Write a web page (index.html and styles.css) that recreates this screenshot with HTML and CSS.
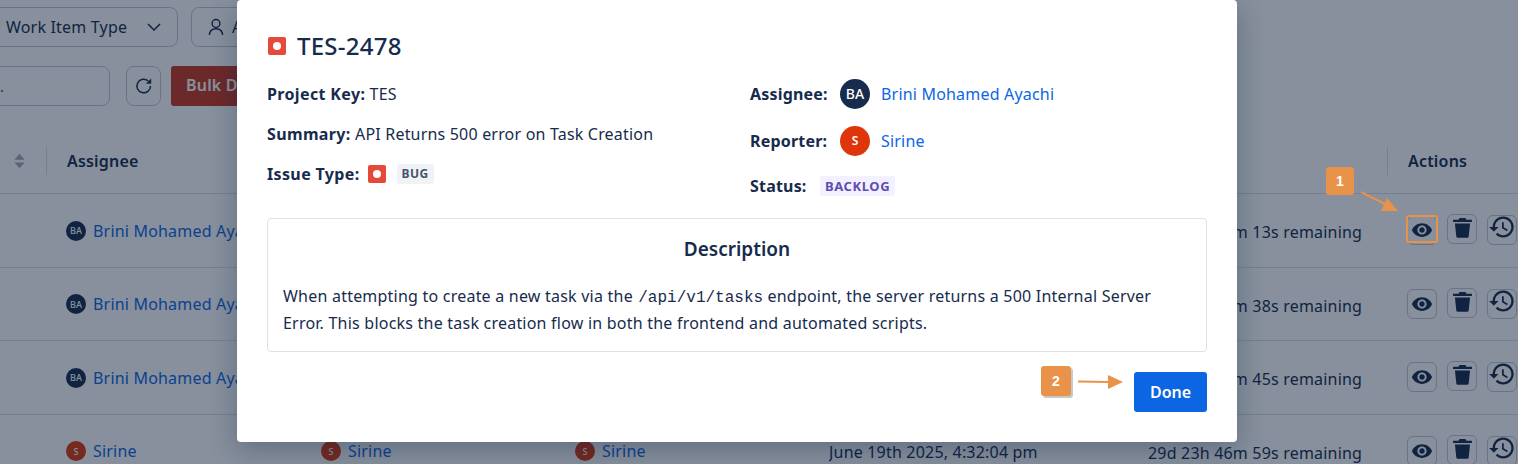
FILE: index.html
```html
<!DOCTYPE html>
<html lang="en">
<head>
<meta charset="utf-8">
<title>TES-2478</title>
<link rel="stylesheet" href="styles.css">
</head>
<body>
<svg class="defs" width="0" height="0" aria-hidden="true">
  <symbol id="eye" viewBox="0 0 24 24"><path d="M12 4.5C7 4.5 2.73 7.61 1 12c1.73 4.39 6 7.5 11 7.5s9.27-3.11 11-7.5c-1.73-4.39-6-7.5-11-7.5zM12 17c-2.76 0-5-2.24-5-5s2.24-5 5-5 5 2.24 5 5-2.24 5-5 5zm0-8c-1.66 0-3 1.34-3 3s1.34 3 3 3 3-1.34 3-3-1.34-3-3-3z"/></symbol>
  <symbol id="trash" viewBox="0 0 20 20"><path d="M7.2 1h5.600l1 1.600h5.200v2.200H1V2.600h5.200zM2.800 6.200h14.400l-1.300 12.400a1.400 1.400 0 0 1-1.400 1.200H5.500a1.400 1.400 0 0 1-1.400-1.200z"/></symbol>
  <symbol id="history" viewBox="0 0 24 24"><path d="M13 3c-4.97 0-9 4.03-9 9H1l3.89 3.89.07.14L9 12H6c0-3.87 3.13-7 7-7s7 3.13 7 7-3.13 7-7 7c-1.93 0-3.68-.79-4.94-2.06l-1.42 1.42C8.27 19.99 10.51 21 13 21c4.97 0 9-4.03 9-9s-4.03-9-9-9zm-1 5v5l4.28 2.54.72-1.21-3.5-2.08V8H12z"/></symbol>
  <symbol id="bug" viewBox="0 0 18 18"><rect width="18" height="18" rx="2" fill="#e5493a"/><circle cx="9" cy="9" r="4" fill="#fff"/></symbol>
</svg>

<main class="page">
  <div class="toolbar">
    <div class="chip chip-type"><span>Work Item Type</span>
      <svg class="chevron" viewBox="0 0 14 8"><path d="M1 1l6 6 6-6"/></svg>
    </div>
    <div class="chip chip-assignee">
      <svg class="user" viewBox="0 0 18 20"><circle cx="9" cy="6" r="4.400"/><path d="M1.500 19c.4-4.600 3.400-7 7.500-7s7.100 2.400 7.500 7"/></svg>
      <span>Assignee</span>
    </div>
  </div>
  <div class="toolbar toolbar-search">
    <div class="search"><span>Search...</span></div>
    <div class="refresh">
      <svg viewBox="0 0 18 18"><path d="M15.500 9A6.800 6.800 0 1 1 13.300 4"/><path class="fill" d="M16.200 1.500v5.300h-5.300z"/></svg>
    </div>
    <div class="bulk">Bulk Delete</div>
  </div>

  <section class="table">
    <div class="row head">
      <div class="cell cell-sort">
        <svg class="sort" viewBox="0 0 12 16"><path d="M6 0l5.500 6.500H.5zM6 16L.5 9.500h11z"/></svg>
        <i class="rule"></i>
      </div>
      <div class="cell cell-head">Assignee</div>
      <div class="cell"></div>
      <div class="cell"></div>
      <div class="cell"></div>
      <div class="cell cell-end"><i class="rule rule-end"></i></div>
      <div class="cell cell-head">Actions</div>
    </div>

    <div class="row">
      <div class="cell"></div>
      <div class="cell person"><b class="dot navy">BA</b><a>Brini Mohamed Ayachi</a></div>
      <div class="cell"></div>
      <div class="cell"></div>
      <div class="cell"></div>
      <div class="cell left-time">29d 23h 47m 13s remaining</div>
      <div class="cell actions">
        <span class="act"><svg class="i-eye"><use href="#eye"/></svg></span>
        <span class="act up"><svg class="i-trash"><use href="#trash"/></svg></span>
        <span class="act"><svg class="i-history"><use href="#history"/></svg></span>
      </div>
    </div>
    <div class="row">
      <div class="cell"></div>
      <div class="cell person"><b class="dot navy">BA</b><a>Brini Mohamed Ayachi</a></div>
      <div class="cell"></div>
      <div class="cell"></div>
      <div class="cell"></div>
      <div class="cell left-time">29d 23h 47m 38s remaining</div>
      <div class="cell actions">
        <span class="act"><svg class="i-eye"><use href="#eye"/></svg></span>
        <span class="act up"><svg class="i-trash"><use href="#trash"/></svg></span>
        <span class="act"><svg class="i-history"><use href="#history"/></svg></span>
      </div>
    </div>
    <div class="row">
      <div class="cell"></div>
      <div class="cell person"><b class="dot navy">BA</b><a>Brini Mohamed Ayachi</a></div>
      <div class="cell"></div>
      <div class="cell"></div>
      <div class="cell"></div>
      <div class="cell left-time">29d 23h 47m 45s remaining</div>
      <div class="cell actions">
        <span class="act"><svg class="i-eye"><use href="#eye"/></svg></span>
        <span class="act up"><svg class="i-trash"><use href="#trash"/></svg></span>
        <span class="act"><svg class="i-history"><use href="#history"/></svg></span>
      </div>
    </div>
    <div class="row">
      <div class="cell"></div>
      <div class="cell person"><b class="dot red">S</b><a>Sirine</a></div>
      <div class="cell person"><b class="dot red">S</b><a>Sirine</a></div>
      <div class="cell person"><b class="dot red">S</b><a>Sirine</a></div>
      <div class="cell created">June 19th 2025, 4:32:04 pm</div>
      <div class="cell left-time">29d 23h 46m 59s remaining</div>
      <div class="cell actions">
        <span class="act"><svg class="i-eye"><use href="#eye"/></svg></span>
        <span class="act up"><svg class="i-trash"><use href="#trash"/></svg></span>
        <span class="act"><svg class="i-history"><use href="#history"/></svg></span>
      </div>
    </div>
  </section>
</main>

<div class="scrim"></div>

<div class="modal">
  <header class="modal-head">
    <svg class="bug"><use href="#bug"/></svg>
    <h1>TES-2478</h1>
  </header>
  <div class="details">
    <div class="col col-left">
      <p><strong>Project Key:</strong> TES</p>
      <p><strong>Summary:</strong> API Returns 500 error on Task Creation</p>
      <p class="flexline"><strong>Issue Type:</strong>
        <svg class="bug"><use href="#bug"/></svg>
        <span class="lozenge lozenge-grey">BUG</span></p>
    </div>
    <div class="col col-right">
      <div class="who"><strong>Assignee:</strong><b class="avatar navy-full">BA</b><a>Brini Mohamed Ayachi</a></div>
      <div class="who"><strong>Reporter:</strong><b class="avatar red-full avatar-s">S</b><a>Sirine</a></div>
      <div class="who who-status"><strong>Status:</strong><span class="lozenge lozenge-purple">BACKLOG</span></div>
    </div>
  </div>
  <section class="desc">
    <h2>Description</h2>
    <p>When attempting to create a new task via the <code>/api/v1/tasks</code> endpoint, the server returns a 500 Internal Server Error. This blocks the task creation flow in both the frontend and automated scripts.</p>
  </section>
  <footer class="modal-foot"><button class="done">Done</button></footer>
</div>

<div class="mark mark-eye"></div>
<div class="step step-1">1</div>
<div class="step step-2">2</div>
<svg class="arrow arrow-1" viewBox="0 0 60 40"><path class="shaft" d="M1 1L25 13"/><path class="head" d="M27 7l11 13H21z"/></svg>
<svg class="arrow arrow-2" viewBox="0 0 50 20"><path class="shaft" d="M0 9.500L32 10"/><path class="head" d="M30 3l15 7-15 7z"/></svg>
</body>
</html>
```

FILE: styles.css
```css
* { box-sizing: border-box; }
html, body { margin: 0; height: 464px; overflow: hidden; }
body {
  position: relative;
  background: #fff;
  color: #172b4d;
  font: 400 16px/24px "Noto Sans", "Open Sans", sans-serif;
  letter-spacing: 0.19px;
}
.defs { position: absolute; }
a { color: #0c66e4; }
p, h1, h2 { margin: 0; }
strong { font-weight: 700; }

/* page behind the modal */
.page { width: 1518px; height: 464px; overflow: hidden; }
.toolbar { display: flex; gap: 13px; height: 40px; margin: 7px 0 0 -60px; }
.chip {
  display: flex; align-items: center; height: 40px;
  border: 1px solid #c4c9d2; border-radius: 8px;
}
.chip-type { width: 238px; padding-left: 65px; }
.chip-assignee { width: 200px; padding-left: 16px; gap: 8px; }
.chevron { width: 14px; height: 8px; margin-left: 20px; fill: none; stroke: #172b4d; stroke-width: 1.500; }
.user { width: 16px; height: 18px; fill: none; stroke: #172b4d; stroke-width: 1.600; }
.toolbar-search { margin-top: 19px; gap: 16px; margin-left: -190px; }
.search {
  width: 300px; height: 40px; padding: 7px 0 0 128px;
  border: 1px solid #c4c9d2; border-radius: 8px; color: #626f86;
}
.refresh {
  width: 35px; height: 40px; margin-right: -6px;
  display: flex; align-items: center; justify-content: center;
  border: 1px solid #c4c9d2; border-radius: 8px;
}
.refresh svg { width: 18px; height: 18px; fill: none; stroke: #172b4d; stroke-width: 1.500; }
.refresh .fill { fill: #172b4d; stroke: none; }
.bulk {
  width: 200px; height: 40px; padding: 7px 0 0 15px;
  background: #ca3521; color: #fff; border-radius: 3px; font-weight: 600;
}

.table { margin-top: 24px; }
.row {
  display: grid;
  grid-template-columns: 66px 255px 254px 254px 319px 259px 111px;
  height: 73.5px;
  border-top: 1px solid #dcdfe4;
  align-items: center;
}
.row.head { height: 63px; border-top: 0; font-weight: 600; padding-bottom: 2px; }
.row .cell { position: relative; white-space: nowrap; overflow: hidden; }
.row.head .cell { overflow: visible; }
.cell-sort { height: 28px; }
.cell-head { padding-left: 1px; }
.sort { position: absolute; left: 14px; top: 6px; width: 11px; height: 16px; fill: #a5adba; }
.rule { position: absolute; left: 46px; top: 0; width: 1px; height: 28px; background: #dcdfe4; }
.rule-end { left: 239px; top: -14px; }
.person { display: flex; align-items: center; gap: 7px; padding-top: 1px; }
.created { padding-top: 2px; }
.left-time { padding-top: 4px; }
.dot {
  flex: none; width: 20px; height: 20px; border-radius: 50%;
  display: flex; align-items: center; justify-content: center;
  color: #fff; font: 500 9px/1 "Noto Sans", sans-serif;
}
.navy { background: #172b4d; }
.red { background: #de350b; }
.row .actions { display: flex; align-items: center; gap: 10px; overflow: visible; }
.act {
  flex: none; width: 30px; height: 30px; position: relative;
  display: flex; align-items: center; justify-content: center;
  border: 1px solid #c4c9d2; border-radius: 6px;
}
.act.up { top: -1px; }
.act svg { fill: #172b4d; }
.i-eye { width: 22px; height: 22px; }
.i-trash { width: 21px; height: 21px; margin-top: -3px; }
.i-history { flex: none; width: 28px; height: 28px; margin-top: -6px; }

.scrim { position: absolute; inset: 0; background: rgba(10, 28, 54, 0.49); }

/* modal */
.modal {
  position: absolute; left: 237px; top: 0;
  width: 1000px; height: 442px;
  padding: 30px 30px 30px;
  background: #fff; border-radius: 4px;
  box-shadow: 0 8px 28px rgba(9, 30, 66, 0.3);
}
.modal-head { display: flex; align-items: center; gap: 11px; height: 32px; padding-left: 1px; }
.bug { flex: none; width: 18px; height: 18px; }
h1 { font-size: 24px; font-weight: 500; line-height: 32px; letter-spacing: 0.25px; }
.details { display: grid; grid-template-columns: 483px 1fr; margin-top: 17px; height: 120px; }
.col-left { padding-top: 3px; display: flex; flex-direction: column; gap: 16px; }
.col-left strong { letter-spacing: 0.36px; }
.flexline { display: flex; align-items: center; gap: 8px; }
.flexline .lozenge { margin-left: 3px; }
.col-right { display: flex; flex-direction: column; gap: 17px; }
.who { display: flex; align-items: center; height: 30px; }
.who strong { width: 90px; }
.who-status { height: 26px; }
.who-status strong { width: 70px; }
.avatar {
  flex: none; width: 30px; height: 30px; border-radius: 50%; margin-right: 11px;
  display: flex; align-items: center; justify-content: center;
  color: #fff; font-size: 14px; font-weight: 500; letter-spacing: 0;
}
.avatar-s { font-size: 12px; font-weight: 600; }
.navy-full { background: #172b4d; }
.red-full { background: #de350b; }
.lozenge {
  display: inline-flex; align-items: center; height: 20px; padding: 0 5px;
  border-radius: 3px; font-size: 12px; font-weight: 700; letter-spacing: 0.4px;
}
.lozenge-grey { background: #f1f2f4; color: #44546f; }
.lozenge-purple { background: #f3f0ff; color: #5e4db2; font-size: 13px; letter-spacing: 0.6px; }
.desc {
  margin-top: 19px; height: 134px; padding: 15px;
  border: 1px solid #dfe1e6; border-radius: 4px;
}
h2 { font-size: 19px; font-weight: 600; line-height: 30px; text-align: center; letter-spacing: 0; }
.desc p { margin-top: 19px; line-height: 27px; letter-spacing: 0.22px; }
code { font: 400 16px "Liberation Mono", monospace; letter-spacing: 0; margin-left: 1px; }
.modal-foot { display: flex; justify-content: flex-end; margin-top: 20px; }
.done {
  width: 73px; height: 40px; border: 0; border-radius: 3px;
  background: #0c66e4; color: #fff;
  font: 600 16px "Noto Sans", sans-serif;
}

/* annotations */
.mark { position: absolute; left: 1406px; top: 215px; width: 32px; height: 28px; border: 2px solid #e8924a; border-radius: 3px; }
.step {
  position: absolute; display: flex; align-items: center; justify-content: center;
  background: #e8924a; color: #fff; font: 700 14px "Liberation Sans", sans-serif;
  border-radius: 3px;
}
.step-1 { left: 1326px; top: 167px; width: 28px; height: 28px; }
.step-2 { left: 1041px; top: 366px; width: 30px; height: 30px; box-shadow: 2px 2px 0 #c8c8c8; }
.arrow { position: absolute; overflow: visible; }
.arrow-1 { left: 1360px; top: 191px; width: 60px; height: 40px; }
.arrow-2 { left: 1078px; top: 372px; width: 50px; height: 20px; }
.shaft { fill: none; stroke: #e8924a; stroke-width: 2; }
.head { fill: #e8924a; }
```
